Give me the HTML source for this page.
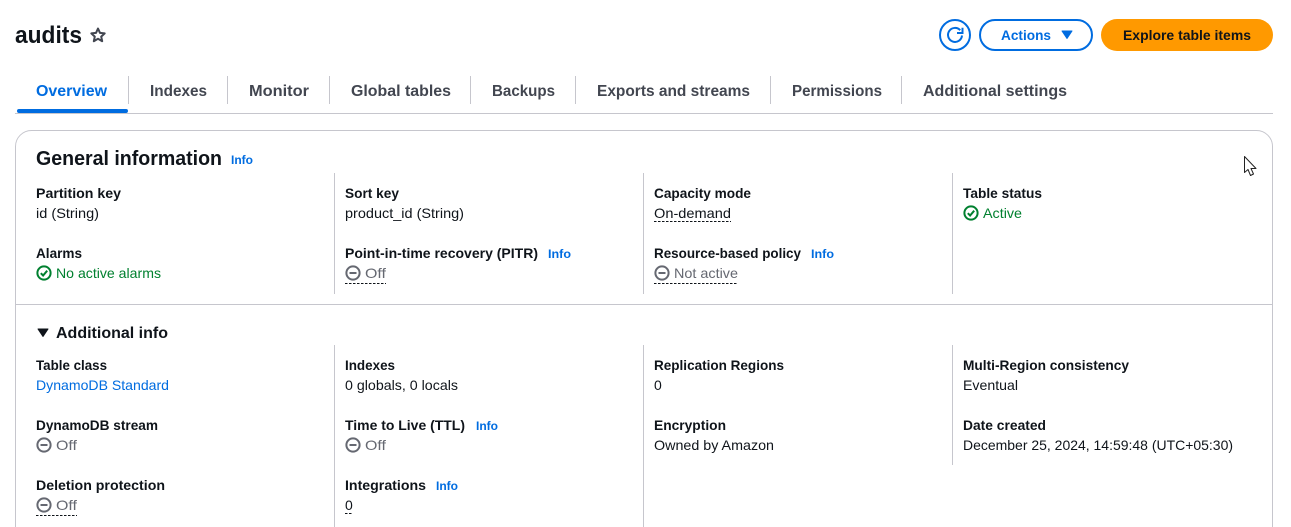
<!DOCTYPE html>
<html><head><meta charset="utf-8"><style>
html,body{margin:0;padding:0;background:#fff;overflow:hidden}
svg{display:block}
text{font-family:"Liberation Sans",sans-serif;font-size:14px;fill:#0f141a}
.b{font-weight:700}
.i{font-size:12px;font-weight:700;fill:#006ce0}
.t{font-size:16px;font-weight:700;fill:#424650}
.g{fill:#00802f}.o{fill:#656871}
.s{fill:none;stroke:#c6c6cd;stroke-width:1}
.d{stroke:#0f141a;stroke-width:1;stroke-dasharray:2.5 1.5;fill:none}
</style></head><body>
<svg width="1291" height="527" viewBox="0 0 1291 527" xmlns="http://www.w3.org/2000/svg">
<defs>
<g id="ok"><circle cx="0" cy="0" r="6.6" fill="none" stroke="#00802f" stroke-width="2"/><path d="M-3.2 0.2L-0.9 2.5L3.2-2.3" fill="none" stroke="#00802f" stroke-width="2"/></g>
<g id="off"><circle cx="0" cy="0" r="6.6" fill="none" stroke="#656871" stroke-width="2"/><path d="M-3.5 0H3.5" fill="none" stroke="#656871" stroke-width="2"/></g>
</defs>
<text class="b" x="15" y="43" style="font-size:24px" textLength="67" lengthAdjust="spacingAndGlyphs">audits</text>
<path d="M98 28.5L100 32.9L104.7 33.4L101.2 36.6L102.2 41.2L98 38.8L93.8 41.2L94.8 36.6L91.3 33.4L96 32.9Z" fill="none" stroke="#424650" stroke-width="2" stroke-linejoin="round"/>

<circle cx="955" cy="35" r="15" fill="#fff" stroke="#006ce0" stroke-width="2"/>
<path d="M960.2 30.2A7 7 0 1 0 962 35.5" fill="none" stroke="#006ce0" stroke-width="2"/>
<path d="M957 33H962.5V27.8" fill="none" stroke="#006ce0" stroke-width="2"/>
<rect x="980" y="20" width="112" height="30" rx="15" fill="#fff" stroke="#006ce0" stroke-width="2"/>
<text class="b" x="1001" y="40" style="fill:#006ce0" textLength="50" lengthAdjust="spacingAndGlyphs">Actions</text>
<path d="M1062 31H1072L1067 38.5Z" fill="#006ce0" stroke="#006ce0" stroke-width="1" stroke-linejoin="round"/>
<rect x="1101" y="19" width="172" height="32" rx="16" fill="#ff9900"/>
<text class="b" x="1123" y="40" textLength="128" lengthAdjust="spacingAndGlyphs">Explore table items</text>

<text class="t" x="36" y="96" style="fill:#006ce0" textLength="71" lengthAdjust="spacingAndGlyphs">Overview</text>
<text class="t" x="150" y="96" textLength="57" lengthAdjust="spacingAndGlyphs">Indexes</text>
<text class="t" x="249" y="96" textLength="60" lengthAdjust="spacingAndGlyphs">Monitor</text>
<text class="t" x="351" y="96" textLength="100" lengthAdjust="spacingAndGlyphs">Global tables</text>
<text class="t" x="492" y="96" textLength="63" lengthAdjust="spacingAndGlyphs">Backups</text>
<text class="t" x="597" y="96" textLength="153" lengthAdjust="spacingAndGlyphs">Exports and streams</text>
<text class="t" x="792" y="96" textLength="90" lengthAdjust="spacingAndGlyphs">Permissions</text>
<text class="t" x="923" y="96" textLength="144" lengthAdjust="spacingAndGlyphs">Additional settings</text>
<path class="s" d="M128.5 76V104M227.5 76V104M329.5 76V104M470.5 76V104M575.5 76V104M770.5 76V104M901.5 76V104"/>
<path class="s" d="M15 113.5H1273"/>
<rect x="17" y="109" width="111" height="4" rx="2" fill="#006ce0"/>

<path class="s" d="M15.5 527V146.5A16 16 0 0 1 31.5 130.5H1256.5A16 16 0 0 1 1272.5 146.5V527"/>
<path class="s" d="M16 304.5H1272"/>
<path class="s" d="M334.5 173V294M643.5 173V294M952.5 173V294M334.5 345V527M643.5 345V527M952.5 345V465"/>

<text class="b" x="36" y="165" style="font-size:20px" textLength="186" lengthAdjust="spacingAndGlyphs">General information</text>
<text class="i" x="231" y="164" textLength="22" lengthAdjust="spacingAndGlyphs">Info</text>

<path d="M1244.5 156.5V172.5L1248 169.5L1250.5 175.5L1253.5 174L1251 168.5H1256Z" fill="#fff" stroke="#222" stroke-width="1" stroke-linejoin="round"/>

<text class="b" x="36" y="198" textLength="85" lengthAdjust="spacingAndGlyphs">Partition key</text>
<text x="36" y="218" textLength="63" lengthAdjust="spacingAndGlyphs">id (String)</text>
<text class="b" x="36" y="258" textLength="46" lengthAdjust="spacingAndGlyphs">Alarms</text>
<use href="#ok" x="44" y="273"/>
<text class="g" x="56" y="278" textLength="105" lengthAdjust="spacingAndGlyphs">No active alarms</text>

<text class="b" x="345" y="198" textLength="54" lengthAdjust="spacingAndGlyphs">Sort key</text>
<text x="345" y="218" textLength="119" lengthAdjust="spacingAndGlyphs">product_id (String)</text>
<text class="b" x="345" y="258" textLength="193" lengthAdjust="spacingAndGlyphs">Point-in-time recovery (PITR)</text>
<text class="i" x="548" y="258" textLength="23" lengthAdjust="spacingAndGlyphs">Info</text>
<use href="#off" x="353" y="273"/>
<text class="o" x="365" y="278" textLength="21" lengthAdjust="spacingAndGlyphs">Off</text>
<path class="d" d="M345 283.5H386"/>

<text class="b" x="654" y="198" textLength="97" lengthAdjust="spacingAndGlyphs">Capacity mode</text>
<text x="654" y="218" textLength="77" lengthAdjust="spacingAndGlyphs">On-demand</text>
<path class="d" d="M654 221.5H731"/>
<text class="b" x="654" y="258" textLength="147" lengthAdjust="spacingAndGlyphs">Resource-based policy</text>
<text class="i" x="811" y="258" textLength="23" lengthAdjust="spacingAndGlyphs">Info</text>
<use href="#off" x="662" y="273"/>
<text class="o" x="674" y="278" textLength="64" lengthAdjust="spacingAndGlyphs">Not active</text>
<path class="d" d="M654 283.5H738"/>

<text class="b" x="963" y="198" textLength="79" lengthAdjust="spacingAndGlyphs">Table status</text>
<use href="#ok" x="971" y="213"/>
<text class="g" x="983" y="218" textLength="39" lengthAdjust="spacingAndGlyphs">Active</text>

<path d="M38 329H48L43 336.5Z" fill="#0f141a" stroke="#0f141a" stroke-width="1" stroke-linejoin="round"/>
<text class="b" x="56" y="338" style="font-size:16px" textLength="112" lengthAdjust="spacingAndGlyphs">Additional info</text>

<text class="b" x="36" y="370" textLength="71" lengthAdjust="spacingAndGlyphs">Table class</text>
<text x="36" y="390" style="fill:#006ce0" textLength="133" lengthAdjust="spacingAndGlyphs">DynamoDB Standard</text>
<text class="b" x="36" y="430" textLength="122" lengthAdjust="spacingAndGlyphs">DynamoDB stream</text>
<use href="#off" x="44" y="445"/>
<text class="o" x="56" y="450" textLength="21" lengthAdjust="spacingAndGlyphs">Off</text>
<text class="b" x="36" y="490" textLength="129" lengthAdjust="spacingAndGlyphs">Deletion protection</text>
<use href="#off" x="44" y="505"/>
<text class="o" x="56" y="510" textLength="21" lengthAdjust="spacingAndGlyphs">Off</text>
<path class="d" d="M36 515.5H77"/>

<text class="b" x="345" y="370" textLength="50" lengthAdjust="spacingAndGlyphs">Indexes</text>
<text x="345" y="390" textLength="113" lengthAdjust="spacingAndGlyphs">0 globals, 0 locals</text>
<text class="b" x="345" y="430" textLength="120" lengthAdjust="spacingAndGlyphs">Time to Live (TTL)</text>
<text class="i" x="476" y="430" textLength="22" lengthAdjust="spacingAndGlyphs">Info</text>
<use href="#off" x="353" y="445"/>
<text class="o" x="365" y="450" textLength="21" lengthAdjust="spacingAndGlyphs">Off</text>
<text class="b" x="345" y="490" textLength="81" lengthAdjust="spacingAndGlyphs">Integrations</text>
<text class="i" x="436" y="490" textLength="22" lengthAdjust="spacingAndGlyphs">Info</text>
<text x="345" y="510">0</text>
<path class="d" d="M345 513.5H353"/>

<text class="b" x="654" y="370" textLength="130" lengthAdjust="spacingAndGlyphs">Replication Regions</text>
<text x="654" y="390">0</text>
<text class="b" x="654" y="430" textLength="72" lengthAdjust="spacingAndGlyphs">Encryption</text>
<text x="654" y="450" textLength="120" lengthAdjust="spacingAndGlyphs">Owned by Amazon</text>

<text class="b" x="963" y="370" textLength="166" lengthAdjust="spacingAndGlyphs">Multi-Region consistency</text>
<text x="963" y="390" textLength="55" lengthAdjust="spacingAndGlyphs">Eventual</text>
<text class="b" x="963" y="430" textLength="83" lengthAdjust="spacingAndGlyphs">Date created</text>
<text x="963" y="450" textLength="270" lengthAdjust="spacingAndGlyphs">December 25, 2024, 14:59:48 (UTC+05:30)</text>
</svg>
</body></html>
